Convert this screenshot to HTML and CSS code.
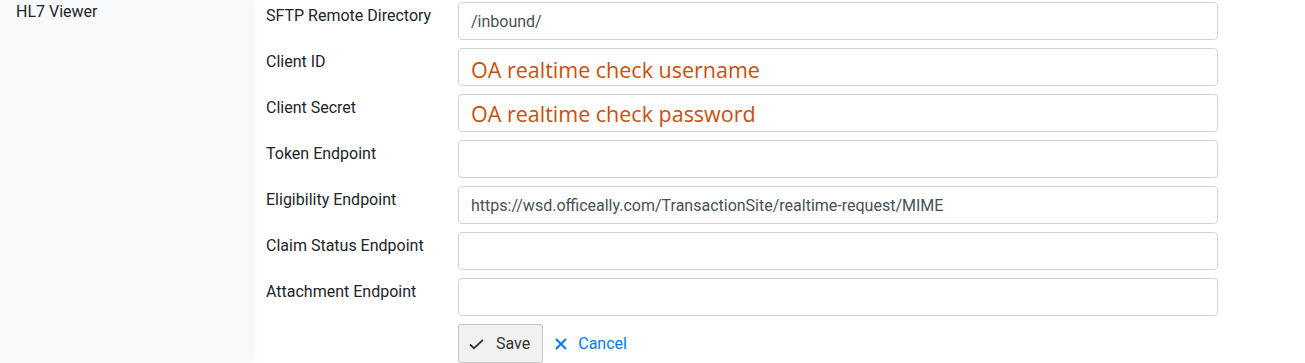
FILE: index.html
```html
<!DOCTYPE html>
<html lang="en">
<head>
    <meta charset="UTF-8">
    <title>Clearinghouse Settings</title>
    <link rel="stylesheet" href="styles.css">
</head>
<body>
    <div class="layout">
        <nav class="sidebar">
            <a class="navlink" href="#">HL7 Viewer</a>
        </nav>
        <main class="content">
            <form class="settings">
                <div class="row">
                    <label>SFTP Remote Directory</label>
                    <input type="text" value="/inbound/">
                </div>
                <div class="row">
                    <label>Client ID</label>
                    <input type="text" class="hint hint-top" value="OA realtime check username">
                </div>
                <div class="row">
                    <label>Client Secret</label>
                    <input type="text" class="hint" value="OA realtime check password">
                </div>
                <div class="row">
                    <label>Token Endpoint</label>
                    <input type="text" value="">
                </div>
                <div class="row">
                    <label>Eligibility Endpoint</label>
                    <input type="text" value="https://wsd.officeally.com/TransactionSite/realtime-request/MIME">
                </div>
                <div class="row">
                    <label>Claim Status Endpoint</label>
                    <input type="text" value="">
                </div>
                <div class="row">
                    <label>Attachment Endpoint</label>
                    <input type="text" value="">
                </div>
                <div class="actions">
                    <button type="button" class="btn-save">
                        <svg width="15" height="14" viewBox="0 0 15 14"><path d="M1 7.5 L5 11.2 L14 2.8" fill="none" stroke="#333" stroke-width="1.8"/></svg>
                        Save
                    </button>
                    <a class="btn-cancel" href="#">
                        <svg width="12" height="12" viewBox="0 0 12 12"><path d="M1 1 L11 11 M11 1 L1 11" stroke="#007bff" stroke-width="2"/></svg>
                        Cancel
                    </a>
                </div>
            </form>
        </main>
    </div>
</body>
</html>
```

FILE: styles.css
```css
body {
    margin: 0;
    font: 16px Roboto, "Liberation Sans", sans-serif;
    color: #212529;
    background: #fff;
    overflow: hidden;
}
.layout {
    display: flex;
    min-height: 100vh;
}
.sidebar {
    width: 250px;
    flex-shrink: 0;
    background: #f8f9fa;
    box-shadow: 3px 0 8px rgba(0, 0, 0, 0.05);
    position: relative;
    z-index: 1;
    padding: 0 16px;
    box-sizing: border-box;
}
.navlink {
    display: block;
    color: #212529;
    text-decoration: none;
    line-height: 24px;
}
.content {
    flex: 1;
    padding: 2px 16px 0;
}
.row {
    display: flex;
    align-items: flex-start;
    margin-bottom: 8px;
}
.row label {
    width: 192px;
    flex-shrink: 0;
    line-height: 24px;
    padding-top: 2px;
}
.row input {
    width: 760px;
    height: 38px;
    box-sizing: border-box;
    border: 1px solid #ced4da;
    border-radius: 4px;
    padding: 0 12px;
    font: 16px Roboto, "Liberation Sans", sans-serif;
    color: #495057;
    outline: none;
}
.row input.hint {
    font: 21.5px "Open Sans", "Noto Sans", sans-serif;
    color: #c9500c;
    padding-top: 0;
}
.row input.hint-top {
    padding-top: 4px;
}
.actions {
    display: flex;
    align-items: center;
    margin-left: 192px;
}
.btn-save {
    display: flex;
    align-items: center;
    gap: 12px;
    height: 39px;
    padding: 0 12px 0 10px;
    background: #f1f1f1;
    border: 1px solid #bfc4c9;
    border-radius: 3px;
    font: 16px Roboto, "Liberation Sans", sans-serif;
    color: #333;
}
.btn-cancel {
    display: flex;
    align-items: center;
    gap: 11px;
    margin-left: 12px;
    color: #007bff;
    text-decoration: none;
}
```
